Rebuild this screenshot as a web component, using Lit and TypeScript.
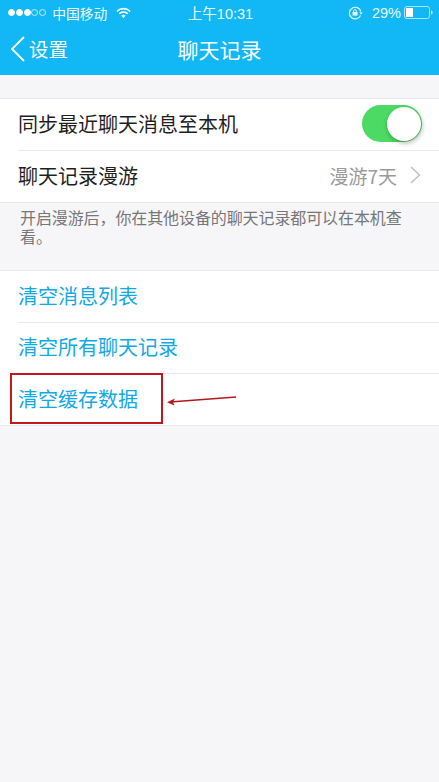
import { LitElement, html, css } from "lit";
import { customElement } from "lit/decorators.js";

@customElement("app-root")
export class AppRoot extends LitElement {
  static styles = css`
    :host {
      display: block;
      width: 439px;
      height: 782px;
      overflow: hidden;
      background: #f6f6f9;
      font-family: "Noto Sans CJK SC", "Liberation Sans", sans-serif;
    }
    .header {
      height: 75px;
      background: #12b7f5;
      color: #fff;
      display: flex;
      flex-direction: column;
    }
    .status {
      height: 25px;
      display: grid;
      grid-template-columns: 1fr auto 1fr;
      align-items: center;
      padding: 0 6px 0 8px;
      font-size: 13.8px;
      color: #eafaff;
    }
    .left, .right { display: flex; align-items: center; }
    .left { gap: 6px; }
    .right { justify-content: flex-end; gap: 3px; }
    .time { font-size: 14.5px; font-family: "Liberation Sans", "Noto Sans CJK SC", sans-serif; }
    .dots { display: flex; gap: 0.8px; }
    .dot { width: 7px; height: 7px; border-radius: 50%; background: #fff; border: 1px solid #fff; box-sizing: border-box; }
    .dot.off { background: transparent; border-color: #c4eefc; }
    .nav {
      flex: 1;
      display: grid;
      grid-template-columns: 1fr auto 1fr;
      align-items: center;
      padding-bottom: 3px;
    }
    .back { display: flex; align-items: center; gap: 4px; padding-left: 10px; font-size: 19.5px; }
    .title { font-size: 21px; font-weight: 400; }
    .list {
      background: #fff;
      border-top: 1px solid #e8e8ec;
      border-bottom: 1px solid #e8e8ec;
    }
    .first { margin-top: 23px; }
    .row {
      position: relative;
      height: 51px;
      display: flex;
      align-items: center;
      justify-content: space-between;
      padding: 0 18px 2px;
      box-sizing: border-box;
      font-size: 20px;
      color: #1f1f1f;
    }
    .row + .row { height: 51.5px; padding-top: 1px; }
    .row + .row::before {
      content: "";
      position: absolute;
      left: 18px;
      right: 0;
      top: 0;
      height: 1px;
      background: #e8e8ec;
    }
    .link { color: #12a9e4; }
    .toggle {
      position: relative;
      width: 60px;
      height: 37px;
      margin-right: -1px;
      border-radius: 18.5px;
      background: #4cd964;
    }
    .knob {
      position: absolute;
      top: 2px;
      right: 1px;
      width: 34px;
      height: 34px;
      border-radius: 50%;
      background: #fff;
      box-shadow: 1px 2px 5px rgba(0, 0, 0, 0.3);
    }
    .value { display: flex; align-items: center; gap: 13px; color: #9a9a9a; font-size: 19px; }
    .note {
      height: 67px;
      padding: 5px 18px 0 20px;
      box-sizing: border-box;
      font-size: 16px;
      letter-spacing: -0.1px;
      line-height: 19.5px;
      color: #777;
    }
    .mark {
      position: absolute;
      left: 10px;
      top: 0;
      width: 153px;
      height: 51px;
      box-sizing: border-box;
      border: 2px solid #c5161d;
    }
    .arrow { position: absolute; left: 166px; top: 20px; }
  `;

  render() {
    return html`
      <div class="header">
        <div class="status">
          <div class="left">
            <span class="dots">
              <i class="dot"></i><i class="dot"></i><i class="dot"></i><i class="dot off"></i><i class="dot off"></i>
            </span>
            <span>中国移动</span>
            <svg width="15" height="12" viewBox="0 0 16 12" fill="none" stroke="#fff" stroke-width="1.7" style="margin-left:3px">
              <path d="M1 4.2a10 10 0 0 1 14 0" />
              <path d="M3.4 6.8a6.6 6.6 0 0 1 9.2 0" />
              <path d="M8 11.4 5.7 9a3.3 3.3 0 0 1 4.600 0z" fill="#fff" stroke="none" />
            </svg>
          </div>
          <span class="time">上午10:31</span>
          <div class="right">
            <svg width="16" height="14" viewBox="0 0 16 14" fill="none" stroke="#eafaff" style="margin-right:5px">
              <path d="M12.500 9.500a5.800 5.800 0 1 1 .3-4" stroke-width="1.200" />
              <path d="M11.300 6.400h3.400l-1.700 2z" fill="#eafaff" stroke="none" />
              <rect x="4.500" y="6" width="5" height="3.600" fill="#eafaff" stroke="none" />
              <path d="M5.600 6V5a1.400 1.400 0 0 1 2.800 0v1" stroke-width=".9" />
            </svg>
            <span class="time">29%</span>
            <svg width="29" height="13" viewBox="0 0 29 13" fill="none">
              <rect x=".5" y=".5" width="25" height="12" rx="2.500" stroke="#a8e6fc" />
              <rect x="2" y="2" width="7" height="9" fill="#fff" />
              <path d="M27 4.500c1.200.3 1.600 1 1.600 2s-.4 1.700-1.600 2z" fill="#d5f2fd" />
            </svg>
          </div>
        </div>
        <div class="nav">
          <div class="back">
            <svg width="15" height="26" viewBox="0 0 15 26" fill="none" stroke="#fff" stroke-width="1.800">
              <path d="M14 1 2 13l12 12" />
            </svg>
            <span>设置</span>
          </div>
          <div class="title">聊天记录</div>
          <div></div>
        </div>
      </div>

      <div class="list first">
        <div class="row">
          <span>同步最近聊天消息至本机</span>
          <div class="toggle"><div class="knob"></div></div>
        </div>
        <div class="row">
          <span>聊天记录漫游</span>
          <span class="value">
            <span>漫游7天</span>
            <svg width="11" height="18" viewBox="0 0 11 18" fill="none" stroke="#c0c0c4" stroke-width="1.500">
              <path d="M1 1l8.500 8-8.500 8" />
            </svg>
          </span>
        </div>
      </div>

      <div class="note">开启漫游后，你在其他设备的聊天记录都可以在本机查看。</div>

      <div class="list">
        <div class="row link">清空消息列表</div>
        <div class="row link">清空所有聊天记录</div>
        <div class="row link">
          清空缓存数据
          <div class="mark"></div>
          <svg class="arrow" width="72" height="16" viewBox="0 0 72 16" fill="none">
            <path d="M70 4 4 9" stroke="#b3171c" stroke-width="1.500" />
            <path d="M1 9.300 9 5.500 7 9l1.500 3.500z" fill="#b3171c" />
          </svg>
        </div>
      </div>
    `;
  }
}
